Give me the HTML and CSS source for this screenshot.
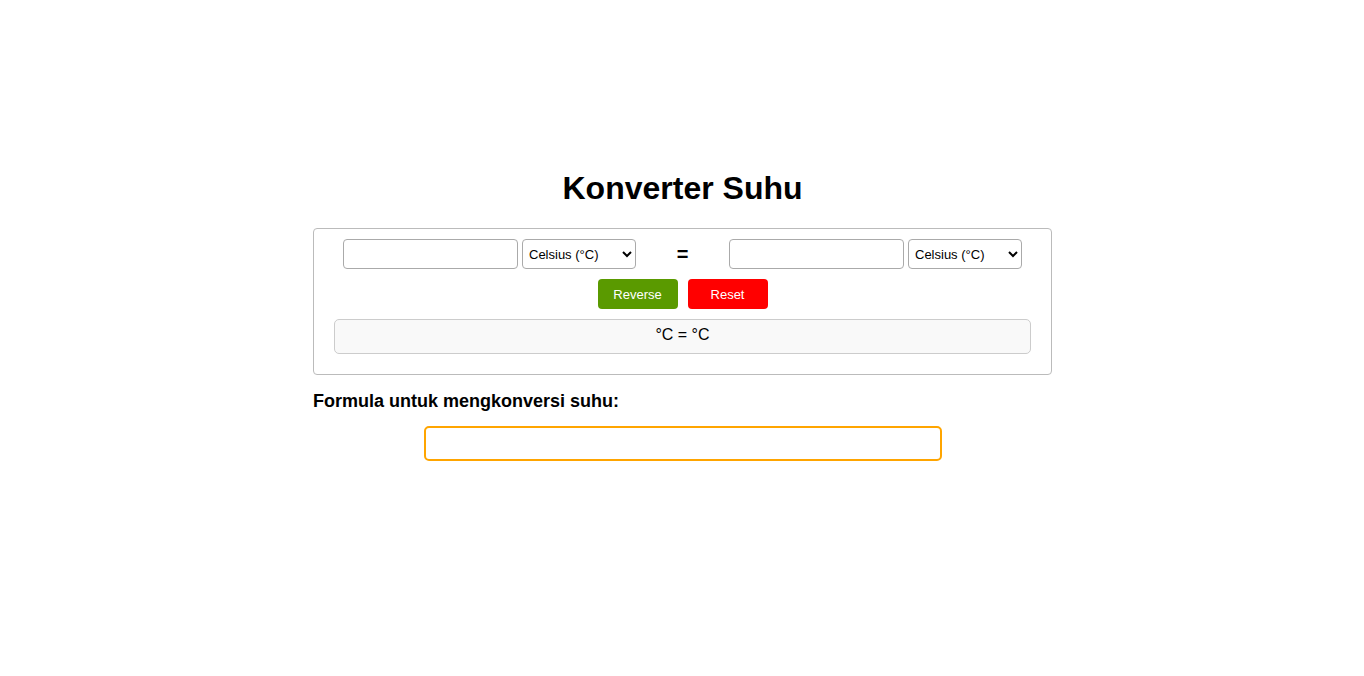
FILE: index.html
```html
<!DOCTYPE html>
<html lang="id">
<head>
  <meta charset="UTF-8" />
  <meta name="viewport" content="width=device-width, initial-scale=1.0" />
  <title>Konverter Suhu</title>
  <link rel="stylesheet" href="styles.css">
</head>
<body>
  <div class="wrap">
    <h1>Konverter Suhu</h1>

    <!-- Konverter -->
    <div class="converter">
      <div class="row">
        <input type="text" class="num">
        <select class="unit">
          <option>Celsius (°C)</option>
          <option>Fahrenheit (°F)</option>
          <option>Kelvin (K)</option>
        </select>
        <span class="eq">=</span>
        <input type="text" class="num">
        <select class="unit">
          <option>Celsius (°C)</option>
          <option>Fahrenheit (°F)</option>
          <option>Kelvin (K)</option>
        </select>
      </div>
      <div class="buttons">
        <button class="btn reverse">Reverse</button>
        <button class="btn reset">Reset</button>
      </div>
      <div class="result">°C = °C</div>
    </div>

    <h3>Formula untuk mengkonversi suhu:</h3>
    <div class="formula"></div>
  </div>
</body>
</html>
```

FILE: styles.css
```css
* { box-sizing: border-box; }
html, body {
  margin: 0;
  padding: 0;
  background: #fff;
  font-family: "Liberation Sans", Arial, sans-serif;
  color: #000;
}
.wrap {
  width: 740px;
  margin: 0 auto;
  padding-top: 149px;
  padding-left: 1px;
}
h1 {
  margin: 21px 0;
  font-size: 32px;
  line-height: 37px;
  text-align: center;
}
.converter {
  border: 1px solid #bbb;
  border-radius: 4px;
  padding: 10px 20px 20px;
}
.row {
  display: flex;
  justify-content: center;
  align-items: center;
  gap: 4px;
}
.num {
  width: 175px;
  height: 30px;
  border: 1px solid #aaa;
  border-radius: 4px;
  font-size: 14px;
  padding: 2px 6px;
}
.unit {
  width: 114px;
  height: 30px;
  border: 1px solid #aaa;
  border-radius: 4px;
  font-family: "Liberation Sans", Arial, sans-serif;
  font-size: 13px;
  padding: 0 2px;
  background: #fff;
}
.eq {
  width: 85px;
  text-align: center;
  font-size: 20px;
  font-weight: bold;
}
.buttons {
  display: flex;
  justify-content: center;
  gap: 10px;
  margin-top: 10px;
}
.btn {
  width: 80px;
  height: 30px;
  border: none;
  border-radius: 4px;
  color: #fff;
  font-family: "Liberation Sans", Arial, sans-serif;
  font-size: 13px;
  cursor: pointer;
}
.reverse { background: #5a9a00; }
.reset { background: #ff0000; }
.result {
  margin-top: 10px;
  height: 35px;
  border: 1px solid #ccc;
  border-radius: 5px;
  background: #f9f9f9;
  text-align: center;
  font-size: 16px;
  padding-top: 6px;
}
h3 {
  margin: 15px 0 14px;
  font-size: 18px;
  line-height: 22px;
}
.formula {
  width: 518px;
  height: 35px;
  margin: 0 auto;
  border: 2px solid #ffa500;
  border-radius: 5px;
}
```
